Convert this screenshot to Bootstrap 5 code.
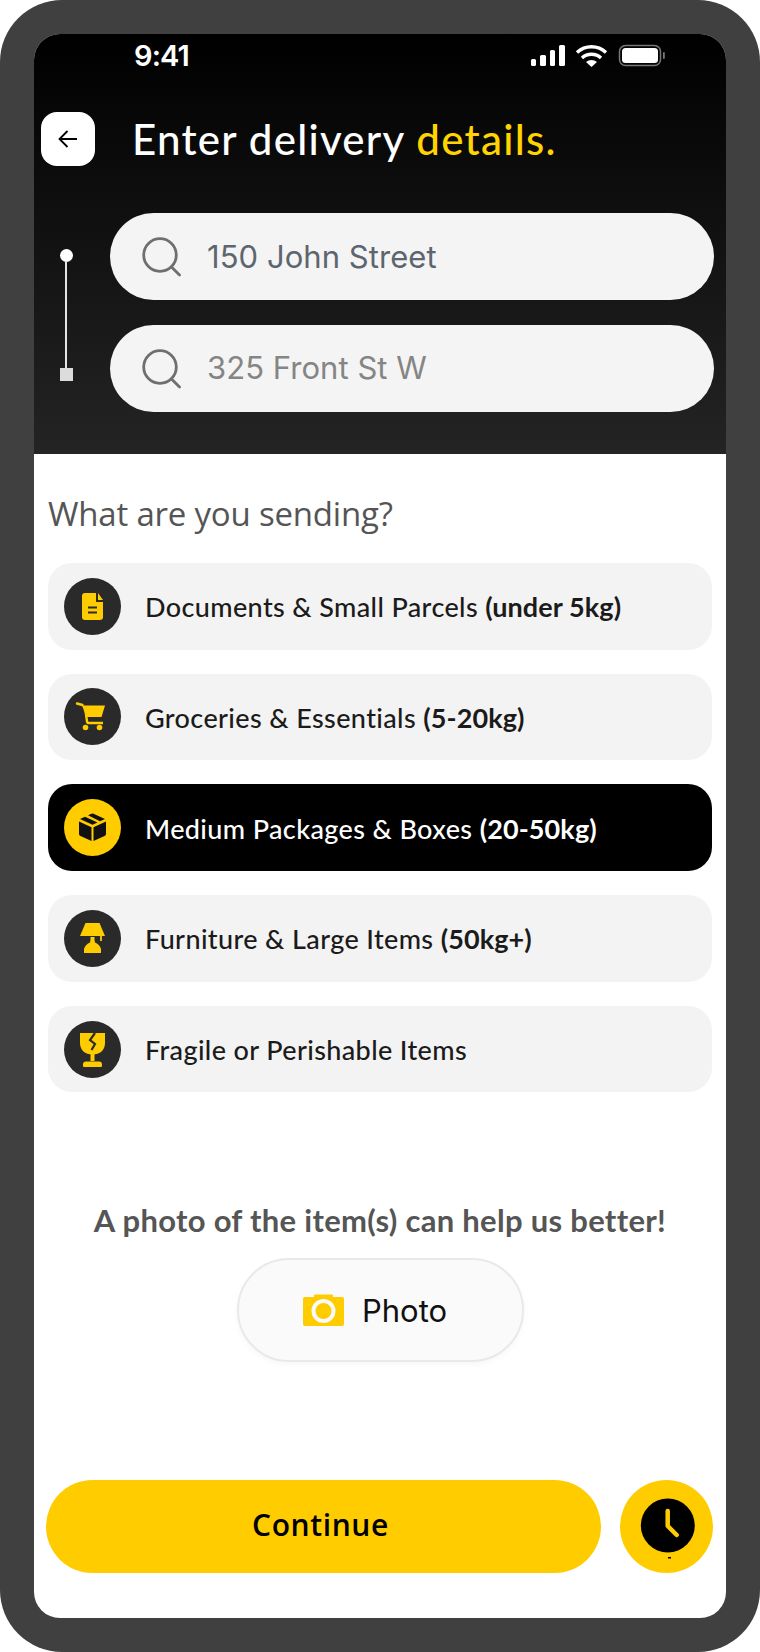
<!DOCTYPE html>
<html lang="en">
<head>
<meta charset="utf-8">
<title>Enter delivery details</title>
<link href="https://cdn.jsdelivr.net/npm/bootstrap@5.3.0/dist/css/bootstrap.min.css" rel="stylesheet">
<style>
html,body{margin:0;background:#fff;}
.phone-frame{width:760px;height:1652px;background:#404040;border-radius:62px;padding:34px;}
.phone-screen{width:692px;height:1584px;background:#fff;border-radius:26px;overflow:hidden;}
.head-area{height:420px;background:linear-gradient(180deg,#000 0%,#242424 100%);flex:none;}
.status-row{height:42px;padding:0 60px 0 100px;color:#fff;}
.clock-time{font:600 29px/1 Inter,sans-serif;letter-spacing:-.9px;}
.title-row{margin-top:36px;padding-left:7px;gap:37px;height:54px;}
.back-btn{width:54px;height:54px;background:#fff;border-radius:16px;border:0;padding:0;flex:none;}
.page-title{margin:0;font:500 42px/54px Lato,sans-serif;color:#fff;letter-spacing:1.25px;}
.page-title span{color:#ffd400;}
.route-row{margin-top:47px;padding:0 12px 0 0;}
.route-line{width:76px;flex:none;padding:36px 12px 0 0;}
.route-dot{width:13px;height:13px;border-radius:50%;background:#fff;flex:none;}
.route-stem{width:2px;height:108px;background:#e4e4e4;flex:none;margin-top:-1px;}
.route-end{width:13px;height:13px;background:#dcdcdc;flex:none;margin-top:-1px;}
.addr-stack{flex:1;gap:25px;}
.addr-field{height:87px;background:#f4f4f4;border-radius:44px;padding-left:32px;gap:26px;font:400 31px/1 Inter,sans-serif;letter-spacing:.05px;color:#5d666e;}
.addr-field.is-next{color:#858585;}
.addr-field.is-next span{margin-top:-3px;}
.main-area{padding:0 14px;flex:1;}
.ask-title{margin:37px 0 0;height:46px;font:400 33px/46px "Open Sans",sans-serif;letter-spacing:-.2px;color:#555;}
.kind-list{margin-top:26px;gap:24.2px;}
.kind-item{height:86.5px;background:#f3f3f3;border-radius:24px;padding-left:16px;gap:24px;font:500 27px/1 Lato,sans-serif;letter-spacing:.38px;color:#1b1b1b;}
.kind-item span{margin-top:1px;}
.kind-item b{font-weight:700;letter-spacing:.1px;}
.kind-item.is-picked{background:#000;color:#fff;}
.kind-ico{width:57px;height:57px;flex:none;display:block;}
.photo-ask{margin:106px 0 0;height:44px;font:700 31px/44px Lato,sans-serif;letter-spacing:.3px;color:#555;text-align:center;}
.photo-btn{width:287px;height:104px;margin:16px auto 0;padding-right:10px;background:#fafafa;border:2px solid #e9e9e9;border-radius:52px;gap:18px;font:400 31px/1 Inter,sans-serif;color:#111;box-shadow:0 3px 6px rgba(0,0,0,.03);}
.action-row{margin-top:118px;gap:19px;}
.go-btn{margin-left:-2px;width:555px;height:93px;flex:none;background:#fc0;border:0;border-radius:47px;font:600 30px/1 "Open Sans",sans-serif;letter-spacing:.6px;color:#000;padding:0 6px 4px 0;}
.time-btn{width:93px;height:93px;flex:none;background:#fc0;border:0;border-radius:50%;padding:0;}
.time-btn svg{display:block;}
</style>
</head>
<body>
<div class="phone-frame">
<div class="phone-screen d-flex flex-column">
  <header class="head-area">
    <div class="status-row d-flex align-items-center justify-content-between">
      <span class="clock-time">9:41</span>
      <svg width="136" height="24" viewBox="0 -1 136 24" fill="#fff">
        <rect x="1" y="15" width="5" height="7" rx="1.5"/><rect x="10" y="11" width="6" height="11" rx="1.5"/><rect x="20" y="6" width="5" height="16" rx="1.5"/><rect x="29" y="1" width="6" height="21" rx="1.5"/>
        <path d="M47 8.500a21 21 0 0 1 29 0" fill="none" stroke="#fff" stroke-width="3.400"/>
        <path d="M52 14a14 14 0 0 1 19 0" fill="none" stroke="#fff" stroke-width="3.400"/>
        <path d="M56 18a8.500 8.500 0 0 1 11 0l-5.500 5z"/>
        <rect x="89.500" y="1.500" width="41" height="20" rx="6" fill="none" stroke="#777" stroke-width="1.500"/>
        <rect x="92" y="4" width="36" height="15" rx="3.500"/>
        <rect x="133" y="8" width="1.800" height="7" rx=".9" fill="#777"/>
      </svg>
    </div>
    <div class="title-row d-flex align-items-center">
      <button class="back-btn d-flex align-items-center justify-content-center" aria-label="Back">
        <svg width="20" height="18" viewBox="0 0 20 18" fill="none" stroke="#000" stroke-width="1.800"><path d="M19 9H1.500M9.500 1 1.500 9l8 8"/></svg>
      </button>
      <h1 class="page-title">Enter delivery <span>details.</span></h1>
    </div>
    <div class="route-row d-flex">
      <div class="route-line d-flex flex-column align-items-center">
        <span class="route-dot"></span><span class="route-stem"></span><span class="route-end"></span>
      </div>
      <div class="addr-stack d-flex flex-column">
        <div class="addr-field d-flex align-items-center">
          <svg width="39" height="40" viewBox="0 0 39 40" fill="none" stroke="#6f6f6f" stroke-width="2.800"><circle cx="18" cy="18" r="16.300"/><path d="m29.500 30 8 8" stroke-linecap="round"/></svg>
          <span>150 John Street</span>
        </div>
        <div class="addr-field is-next d-flex align-items-center">
          <svg width="39" height="40" viewBox="0 0 39 40" fill="none" stroke="#6f6f6f" stroke-width="2.800"><circle cx="18" cy="18" r="16.300"/><path d="m29.500 30 8 8" stroke-linecap="round"/></svg>
          <span>325 Front St W</span>
        </div>
      </div>
    </div>
  </header>
  <main class="main-area">
    <h2 class="ask-title">What are you sending?</h2>
    <div class="kind-list d-flex flex-column">
      <div class="kind-item d-flex align-items-center">
        <svg class="kind-ico" viewBox="0 0 57 57"><circle cx="28.500" cy="28.500" r="28.500" fill="#2a2a2a"/>
          <path d="M21 15h11v9h7v15a3 3 0 0 1-3 3H21a3 3 0 0 1-3-3V18a3 3 0 0 1 3-3z" fill="#fc0"/><path d="M34 15l5 7h-5z" fill="#fc0"/>
          <path d="M24 29.500h9M24 34.500h9" stroke="#2a2a2a" stroke-width="1.800"/></svg>
        <span>Documents &amp; Small Parcels <b>(under 5kg)</b></span>
      </div>
      <div class="kind-item d-flex align-items-center">
        <svg class="kind-ico" viewBox="0 0 57 57"><circle cx="28.500" cy="28.500" r="28.500" fill="#2a2a2a"/>
          <path d="M13 15.500l5.500 1.500" stroke="#fc0" stroke-width="2.400" stroke-linecap="round"/>
          <path d="M18 17.500h23l-3.500 11.500h-15z" fill="#fc0"/><path d="M21 19l2 14.500q.2 1.500 2 1.500h14" fill="none" stroke="#fc0" stroke-width="2.400"/>
          <circle cx="21.500" cy="39.500" r="2.800" fill="#fc0"/><circle cx="35.500" cy="39.500" r="2.800" fill="#fc0"/></svg>
        <span>Groceries &amp; Essentials <b>(5-20kg)</b></span>
      </div>
      <div class="kind-item is-picked d-flex align-items-center">
        <svg class="kind-ico" viewBox="0 0 57 57"><circle cx="28.500" cy="28.500" r="28.500" fill="#fc0"/>
          <path d="M15 22.500l12.500 5.800V42L16.500 37a2.500 2.500 0 0 1-1.500-2.300zM42 22.500l-12.500 5.800V42L40.500 37a2.500 2.500 0 0 0 1.500-2.300z" fill="#111"/>
          <path d="M16 20l5-2.300 12.500 5.800-5 2.300zM24 16.300l3.500-1.600a2.500 2.500 0 0 1 2 0L41 20l-5 2.300z" fill="#111"/></svg>
        <span>Medium Packages &amp; Boxes <b>(20-50kg)</b></span>
      </div>
      <div class="kind-item d-flex align-items-center">
        <svg class="kind-ico" viewBox="0 0 57 57"><circle cx="28.500" cy="28.500" r="28.500" fill="#2a2a2a"/>
          <path d="M21.500 13h14L41 26H16z" fill="#fc0"/><path d="M37 26v5" stroke="#fc0" stroke-width="1.800"/>
          <path d="M26.500 27h4v3l.5 2.500c3.500 1.500 5.500 4 6 6.500v4H20v-4c.5-2.500 2.500-5 6-6.500l.5-2.500z" fill="#fc0"/></svg>
        <span>Furniture &amp; Large Items <b>(50kg+)</b></span>
      </div>
      <div class="kind-item d-flex align-items-center">
        <svg class="kind-ico" viewBox="0 0 57 57"><circle cx="28.500" cy="28.500" r="28.500" fill="#2a2a2a"/>
          <path d="M16 12h25v10c0 7-5 11.500-12.500 11.500S16 29 16 22z" fill="#fc0"/>
          <path d="M26.500 40V32h4v8zM19 45v-1.500a3 3 0 0 1 3-3h13a3 3 0 0 1 3 3V45a1 1 0 0 1-1 1H20a1 1 0 0 1-1-1z" fill="#fc0"/>
          <path d="M31 12l-5 7 5 4-3.500 6" fill="none" stroke="#2a2a2a" stroke-width="2.200"/></svg>
        <span>Fragile or Perishable Items</span>
      </div>
    </div>
    <p class="photo-ask">A photo of the item(s) can help us better!</p>
    <div class="photo-btn d-flex align-items-center justify-content-center">
      <svg width="41" height="32" viewBox="0 0 41 32"><path d="M11 3V1.500a1 1 0 0 1 1-1h17a1 1 0 0 1 1 1V3h9a2 2 0 0 1 2 2v25a2 2 0 0 1-2 2H2a2 2 0 0 1-2-2V5a2 2 0 0 1 2-2z" fill="#fc0"/><circle cx="20.500" cy="17" r="10" fill="#fc0" stroke="#fafafa" stroke-width="4"/></svg>
      <span>Photo</span>
    </div>
    <div class="action-row d-flex">
      <button class="go-btn">Continue</button>
      <button class="time-btn" aria-label="Schedule">
        <svg width="93" height="93" viewBox="0 0 93 93"><circle cx="47.800" cy="45.500" r="27" fill="#000"/><path d="M47.700 31v15l9 9" fill="none" stroke="#fc0" stroke-width="4.500" stroke-linecap="round" stroke-linejoin="round"/><rect x="48" y="77" width="3" height="1.500" fill="#000"/></svg>
      </button>
    </div>
  </main>
</div>
</div>
<script src="https://cdn.jsdelivr.net/npm/bootstrap@5.3.0/dist/js/bootstrap.bundle.min.js"></script>
</body>
</html>
